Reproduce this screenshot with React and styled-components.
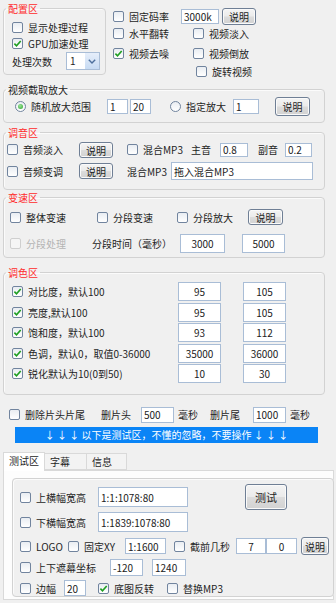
import React from 'react';
import styled, { createGlobalStyle } from 'styled-components';

const GlobalStyle = createGlobalStyle`
  html, body {
    margin: 0;
    padding: 0;
    background: #f0f0f0;
  }
  body {
    font-family: 'Noto Sans CJK SC', 'Noto Sans', sans-serif;
    font-size: 10px;
    color: #1e1e1e;
  }
`;

const Page = styled.div`
  width: 336px;
  height: 603px;
  box-sizing: border-box;
  padding: 3px 0 0 3px;
  overflow: hidden;
  background: #f0f0f0;
`;

const Top = styled.div`
  display: flex;
  align-items: flex-start;
`;

const Group = styled.fieldset`
  margin: ${(p) => p.$mt || 0}px 0 0 ${(p) => p.$ml || 0}px;
  padding: 0;
  min-width: 0;
  width: ${(p) => p.$w}px;
  box-sizing: border-box;
  flex-shrink: 0;
  border: 1px solid #d2d2d2;
  border-radius: 4px;
  box-shadow: inset 1px 1px 0 #fbfbfb;
  background: ${(p) => p.$bg || 'transparent'};
`;

const Legend = styled.legend`
  margin-left: 2px;
  padding: 0 2px;
  font-size: 10px;
  line-height: 11px;
  color: ${(p) => (p.$red ? '#ff2b2b' : '#1e1e1e')};
`;

const Body = styled.div`
  display: flex;
  flex-direction: column;
  gap: ${(p) => p.$gap || 0}px;
  padding: ${(p) => p.$pad || '0'};
`;

const Column = styled.div`
  display: flex;
  flex-direction: column;
  margin: ${(p) => p.$mt || 0}px 0 0 ${(p) => p.$ml || 0}px;
`;

const Row = styled.div`
  display: flex;
  align-items: center;
  height: ${(p) => p.$h}px;
  margin-top: ${(p) => p.$mt || 0}px;
  padding-left: ${(p) => p.$pl || 0}px;
  white-space: nowrap;
`;

const Cell = styled.div`
  width: ${(p) => p.$w}px;
  flex-shrink: 0;
  display: flex;
  align-items: center;
`;

const CheckLabel = styled.label`
  display: inline-flex;
  align-items: center;
  gap: 5px;
  white-space: nowrap;
  color: ${(p) => (p.$disabled ? '#b4b4b4' : '#1e1e1e')};
`;

const Box = styled.span`
  width: 11px;
  height: 11px;
  box-sizing: border-box;
  flex-shrink: 0;
  border: 1px solid ${(p) => (p.$disabled ? '#cfcfcf' : '#71849e')};
  border-radius: 2px;
  background: ${(p) =>
    p.$disabled ? '#f5f5f5' : 'linear-gradient(#e9edf2, #ffffff)'};
  display: flex;
  align-items: center;
  justify-content: center;
`;

const RadioDot = styled.span`
  width: 11px;
  height: 11px;
  box-sizing: border-box;
  flex-shrink: 0;
  border: 1px solid #71849e;
  border-radius: 50%;
  background: linear-gradient(#e9edf2, #ffffff);
  display: flex;
  align-items: center;
  justify-content: center;
  &::after {
    content: '';
    display: ${(p) => (p.$on ? 'block' : 'none')};
    width: 5px;
    height: 5px;
    border-radius: 50%;
    background: radial-gradient(circle at 40% 35%, #9be39b, #2ca52c);
  }
`;

const Field = styled.input`
  width: ${(p) => p.$w}px;
  height: ${(p) => p.$h || 16}px;
  margin-left: ${(p) => p.$ml || 0}px;
  box-sizing: border-box;
  flex-shrink: 0;
  border: 1px solid #a9bdd6;
  background: #fff;
  padding: 0 2px;
  font-family: 'Noto Sans CJK SC', 'Noto Sans', sans-serif;
  font-size: 10px;
  color: #222;
  text-align: ${(p) => (p.$center ? 'center' : 'left')};
  outline: none;
`;

const Btn = styled.button`
  width: ${(p) => p.$w}px;
  height: ${(p) => p.$h || 17}px;
  margin: ${(p) => p.$mt || 0}px 0 0 ${(p) => p.$ml || 0}px;
  align-self: ${(p) => (p.$mt ? 'flex-start' : 'center')};
  box-sizing: border-box;
  flex-shrink: 0;
  padding: 0;
  border: 1px solid #6f7f95;
  border-radius: 3px;
  background: linear-gradient(#f4f4f4 0%, #ebebeb 48%, #dcdcdc 52%, #d2d2d2 100%);
  box-shadow: inset 0 0 0 1px #fafafa;
  font-family: 'Noto Sans CJK SC', 'Noto Sans', sans-serif;
  font-size: ${(p) => p.$fs || 10}px;
  color: #1e1e1e;
`;

const Select = styled.div`
  width: 34px;
  height: 18px;
  margin-left: 0;
  box-sizing: border-box;
  display: flex;
  border: 1px solid #a9bdd6;
  background: #fff;
`;

const SelectValue = styled.span`
  flex: 1;
  padding-left: 3px;
  line-height: 16px;
`;

const SelectArrow = styled.span`
  width: 14px;
  background: linear-gradient(#e6eefa, #c7dbf3);
  display: flex;
  align-items: center;
  justify-content: center;
`;

const Notice = styled.div`
  width: 303px;
  height: 16px;
  margin: 4px 0 0 12px;
  background: #0a84f6;
  color: #fff;
  font-size: 10px;
  line-height: 16px;
  text-align: center;
  white-space: nowrap;
`;

const Tabs = styled.div`
  display: flex;
  align-items: flex-end;
  height: 19px;
  margin-top: 8px;
  position: relative;
  z-index: 1;
`;

const Tab = styled.div`
  width: ${(p) => p.$w}px;
  height: ${(p) => (p.$active ? 19 : 17)}px;
  box-sizing: border-box;
  padding-left: 5px;
  border: 1px solid #d9d9d9;
  border-bottom: ${(p) => (p.$active ? 'none' : '1px solid #d9d9d9')};
  margin-left: ${(p) => (p.$active ? 0 : -1)}px;
  background: ${(p) => (p.$active ? '#ffffff' : '#f3f3f3')};
  line-height: 16px;
  margin-bottom: ${(p) => (p.$active ? -1 : 0)}px;
`;

const Panel = styled.div`
  width: 331px;
  height: 130px;
  box-sizing: border-box;
  border: 1px solid #d9d9d9;
  background: #fdfdfd;
  padding: 7px 0 0 4px;
`;

const Split = styled.div`
  display: flex;
  align-items: flex-start;
`;

function Check({ checked, disabled, children }) {
  return (
    <CheckLabel $disabled={disabled}>
      <Box $disabled={disabled}>
        {checked && (
          <svg width="9" height="9" viewBox="0 0 9 9">
            <path d="M1.4 4.6 L3.5 6.8 L7.7 1.9" fill="none" stroke="#1f9f22" strokeWidth="1.6" />
          </svg>
        )}
      </Box>
      {children}
    </CheckLabel>
  );
}

function Radio({ on, children }) {
  return (
    <CheckLabel>
      <RadioDot $on={on} />
      {children}
    </CheckLabel>
  );
}

function Text({ w, h, ml, center, value }) {
  return <Field $w={w} $h={h} $ml={ml} $center={center} value={value} readOnly />;
}

const colorRows = [
  ['对比度，默认100', '95', '105'],
  ['亮度,默认100', '95', '105'],
  ['饱和度，默认100', '93', '112'],
  ['色调，默认0，取值0-36000', '35000', '36000'],
  ['锐化默认为10(0到50)', '10', '30'],
];

export default function App() {
  return (
    <Page>
      <GlobalStyle />
      <Top>
        <Group $w={103}>
          <Legend $red>配置区</Legend>
          <Body $pad="5px 0 4px 8px">
            <Row $h={16}>
              <Check>显示处理过程</Check>
            </Row>
            <Row $h={16}>
              <Check checked>GPU加速处理</Check>
            </Row>
            <Row $h={18} $mt={1}>
              <Cell $w={54}>处理次数</Cell>
              <Select>
                <SelectValue>1</SelectValue>
                <SelectArrow>
                  <svg width="8" height="5" viewBox="0 0 8 5">
                    <path d="M0.8 0.8 L4 4 L7.2 0.8" fill="none" stroke="#4d6f9c" strokeWidth="1.4" />
                  </svg>
                </SelectArrow>
              </Select>
            </Row>
          </Body>
        </Group>
        <Column $mt={5} $ml={7}>
          <Row $h={17}>
            <Cell $w={68}>
              <Check>固定码率</Check>
            </Cell>
            <Text w={38} h={15} value="3000k" />
            <Btn $w={34} $h={17} $ml={3}>说明</Btn>
          </Row>
          <Row $h={16}>
            <Cell $w={80}>
              <Check>水平翻转</Check>
            </Cell>
            <Check>视频淡入</Check>
          </Row>
          <Row $h={16} $mt={4}>
            <Cell $w={80}>
              <Check checked>视频去噪</Check>
            </Cell>
            <Check>视频倒放</Check>
          </Row>
          <Row $h={16} $mt={2} $pl={83}>
            <Check>旋转视频</Check>
          </Row>
        </Column>
      </Top>

      <Group $w={322} $mt={5}>
        <Legend>视频截取放大</Legend>
        <Body $pad="0 0 5px 11px">
          <Row $h={22}>
            <Cell $w={92}>
              <Radio on>随机放大范围</Radio>
            </Cell>
            <Text w={21} h={15} value="1" />
            <Text w={21} h={15} ml={2} value="20" />
            <Cell $w={63} style={{ marginLeft: 19 }}>
              <Radio>指定放大</Radio>
            </Cell>
            <Text w={26} h={15} value="1" />
            <Btn $w={35} $h={19} $ml={16}>说明</Btn>
          </Row>
        </Body>
      </Group>

      <Group $w={322} $mt={4}>
        <Legend $red>调音区</Legend>
        <Body $pad="3px 0 8px 3px" $gap={3}>
          <Row $h={17}>
            <Cell $w={72}>
              <Check>音频淡入</Check>
            </Cell>
            <Btn $w={34} $h={16}>说明</Btn>
            <Cell $w={64} style={{ marginLeft: 14 }}>
              <Check>混合MP3</Check>
            </Cell>
            <Cell $w={29}>主音</Cell>
            <Text w={28} h={14} value="0.8" />
            <Cell $w={27} style={{ marginLeft: 10 }}>副音</Cell>
            <Text w={27} h={14} value="0.2" />
          </Row>
          <Row $h={20}>
            <Cell $w={72}>
              <Check>音频变调</Check>
            </Cell>
            <Btn $w={34} $h={16}>说明</Btn>
            <Cell $w={44} style={{ marginLeft: 14 }}>混合MP3</Cell>
            <Text w={142} h={18} value="拖入混合MP3" />
          </Row>
        </Body>
      </Group>

      <Group $w={322} $mt={2}>
        <Legend $red>变速区</Legend>
        <Body $pad="5px 0 4px 6px" $gap={8}>
          <Row $h={18}>
            <Cell $w={87}>
              <Check>整体变速</Check>
            </Cell>
            <Cell $w={80}>
              <Check>分段变速</Check>
            </Cell>
            <Cell $w={71}>
              <Check>分段放大</Check>
            </Cell>
            <Btn $w={35} $h={16}>说明</Btn>
          </Row>
          <Row $h={19}>
            <Cell $w={82}>
              <Check disabled>分段处理</Check>
            </Cell>
            <Cell $w={88}>分段时间（毫秒）</Cell>
            <Text w={45} h={19} center value="3000" />
            <Text w={43} h={19} ml={17} center value="5000" />
          </Row>
        </Body>
      </Group>

      <Group $w={322} $mt={9}>
        <Legend $red>调色区</Legend>
        <Body $pad="4px 0 11px 8px" $gap={1.5}>
          {colorRows.map(([label, a, b]) => (
            <Row $h={19} key={label}>
              <Cell $w={166}>
                <Check checked>{label}</Check>
              </Cell>
              <Text w={43} h={19} center value={a} />
              <Text w={43} h={19} ml={22} center value={b} />
            </Row>
          ))}
        </Body>
      </Group>

      <Row $h={17} $mt={11} $pl={6}>
        <Cell $w={92}>
          <Check>删除片头片尾</Check>
        </Cell>
        <Cell $w={40}>删片头</Cell>
        <Text w={33} h={16} value="500" />
        <Cell $w={32} style={{ marginLeft: 4 }}>毫秒</Cell>
        <Cell $w={43}>删片尾</Cell>
        <Text w={33} h={16} value="1000" />
        <Cell $w={30} style={{ marginLeft: 4 }}>毫秒</Cell>
      </Row>

      <Notice>↓ ↓ ↓ 以下是测试区，不懂的忽略，不要操作 ↓ ↓ ↓</Notice>

      <Tabs>
        <Tab $w={42} $active>测试区</Tab>
        <Tab $w={43}>字幕</Tab>
        <Tab $w={41}>信息</Tab>
      </Tabs>
      <Panel>
        <Group $w={322} $ml={4} $bg="#f0f0f0">
          <Body $pad="8px 0 0 7px">
            <Split>
              <Column>
                <Row $h={20}>
                  <Cell $w={78}>
                    <Check>上横幅宽高</Check>
                  </Cell>
                  <Text w={90} h={20} value="1:1:1078:80" />
                </Row>
                <Row $h={20} $mt={5}>
                  <Cell $w={78}>
                    <Check>下横幅宽高</Check>
                  </Cell>
                  <Text w={90} h={20} value="1:1839:1078:80" />
                </Row>
              </Column>
              <Btn $w={42} $h={26} $ml={57} $mt={-3} $fs={11}>测试</Btn>
            </Split>
            <Row $h={18} $mt={5}>
              <Cell $w={48}>
                <Check>LOGO</Check>
              </Cell>
              <Cell $w={57}>
                <Check>固定XY</Check>
              </Cell>
              <Text w={41} h={16} value="1:1600" />
              <Cell $w={62} style={{ marginLeft: 8 }}>
                <Check>截前几秒</Check>
              </Cell>
              <Text w={30} h={16} center value="7" />
              <Text w={31} h={16} center value="0" />
              <Btn $w={28} $h={18} $ml={4}>说明</Btn>
            </Row>
            <Row $h={17} $mt={4}>
              <Cell $w={90}>
                <Check>上下遮幕坐标</Check>
              </Cell>
              <Text w={33} h={17} value="-120" />
              <Text w={34} h={17} ml={9} value="1240" />
            </Row>
            <Row $h={16} $mt={4}>
              <Cell $w={44}>
                <Check>边幅</Check>
              </Cell>
              <Text w={22} h={16} value="20" />
              <Cell $w={69} style={{ marginLeft: 12 }}>
                <Check checked>底图反转</Check>
              </Cell>
              <Check>替换MP3</Check>
            </Row>
          </Body>
        </Group>
      </Panel>
    </Page>
  );
}
